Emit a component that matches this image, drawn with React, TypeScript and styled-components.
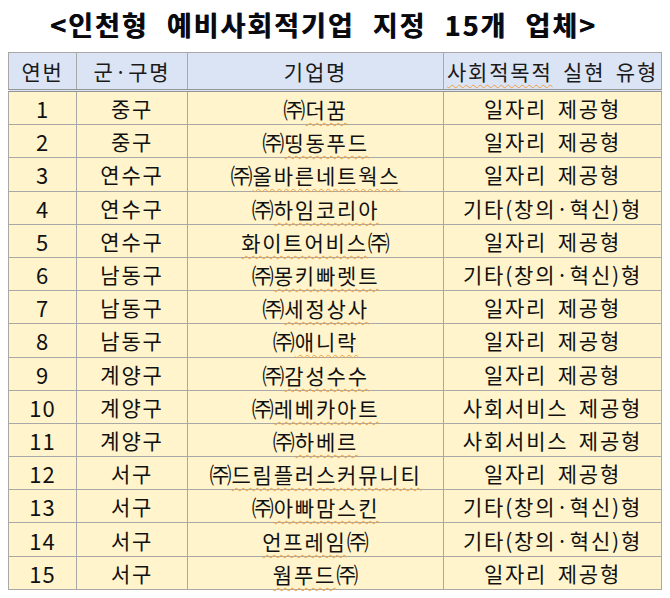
import React from 'react';
import styled, {createGlobalStyle} from 'styled-components';

const GlobalStyle = createGlobalStyle`
  html, body {
    margin: 0;
    padding: 0;
    background: #ffffff;
  }

  body {
    font-family: 'Noto Sans CJK KR', 'Noto Sans', sans-serif;
    color: #111111;
  }
`;

const Page = styled.div`
  width: 670px;
  height: 598px;
  padding: 10px 9px 0 8px;
  box-sizing: border-box;
`;

const Title = styled.h1`
  margin: 0 0 13px;
  padding-right: 22px;
  height: 29px;
  font-size: 27px;
  line-height: 29px;
  font-weight: 700;
  text-align: center;
  letter-spacing: 2px;
  word-spacing: 10px;
  color: #0a0a0a;
  text-shadow: 0.6px 0 0 #1a2a6a;
`;

const Table = styled.table`
  width: 653px;
  border-collapse: collapse;
  table-layout: fixed;
  font-size: 21px;
  letter-spacing: 1.8px;
  word-spacing: 4px;
`;

const HeadCell = styled.th`
  height: 36px;
  padding: 0;
  background: #dbe4f5;
  border: 1px solid #a8a8a8;
  border-bottom: 3px double #959595;
  font-weight: 400;
  text-align: center;
  color: #1a1a1a;
`;

const Cell = styled.td`
  height: 32.2px;
  padding: 0;
  background: #fff4cc;
  border: 1px solid #a8a8a8;
  text-align: center;
  white-space: nowrap;
  color: #111111;
`;

const Num = styled(Cell)`
  font-size: 22px;
  letter-spacing: 1px;
`;

const Squiggle = styled.span`
  text-decoration: underline wavy #f0a040;
  text-decoration-thickness: 1px;
  text-underline-offset: 4px;
`;

const Corp = styled.span`
  letter-spacing: 0;
  font-size: 22px;
`;

type Company = {
  no: number;
  district: string;
  name: string;
  lead: boolean;
  kind: string;
};

const companies: Company[] = [
  {no: 1, district: '중구', name: '더꿈', lead: true, kind: '일자리 제공형'},
  {no: 2, district: '중구', name: '띵동푸드', lead: true, kind: '일자리 제공형'},
  {no: 3, district: '연수구', name: '올바른네트웍스', lead: true, kind: '일자리 제공형'},
  {no: 4, district: '연수구', name: '하임코리아', lead: true, kind: '기타(창의·혁신)형'},
  {no: 5, district: '연수구', name: '화이트어비스', lead: false, kind: '일자리 제공형'},
  {no: 6, district: '남동구', name: '몽키빠렛트', lead: true, kind: '기타(창의·혁신)형'},
  {no: 7, district: '남동구', name: '세정상사', lead: true, kind: '일자리 제공형'},
  {no: 8, district: '남동구', name: '애니락', lead: true, kind: '일자리 제공형'},
  {no: 9, district: '계양구', name: '감성수수', lead: true, kind: '일자리 제공형'},
  {no: 10, district: '계양구', name: '레베카아트', lead: true, kind: '사회서비스 제공형'},
  {no: 11, district: '계양구', name: '하베르', lead: true, kind: '사회서비스 제공형'},
  {no: 12, district: '서구', name: '드림플러스커뮤니티', lead: true, kind: '일자리 제공형'},
  {no: 13, district: '서구', name: '아빠맘스킨', lead: true, kind: '기타(창의·혁신)형'},
  {no: 14, district: '서구', name: '언프레임', lead: false, kind: '기타(창의·혁신)형'},
  {no: 15, district: '서구', name: '웜푸드', lead: false, kind: '일자리 제공형'},
];

export default function App() {
  return (
    <Page>
      <GlobalStyle />
      <Title>&lt;인천형 예비사회적기업 지정 15개 업체&gt;</Title>
      <Table>
        <colgroup>
          <col style={{width: 68}} />
          <col style={{width: 111}} />
          <col style={{width: 256}} />
          <col style={{width: 218}} />
        </colgroup>
        <thead>
          <tr>
            <HeadCell>연번</HeadCell>
            <HeadCell>군·구명</HeadCell>
            <HeadCell>기업명</HeadCell>
            <HeadCell>
              <Squiggle>사회적목적</Squiggle> 실현 유형
            </HeadCell>
          </tr>
        </thead>
        <tbody>
          {companies.map((c) => (
            <tr key={c.no}>
              <Num>{c.no}</Num>
              <Cell>{c.district}</Cell>
              <Cell>
                {c.lead && <Corp>㈜</Corp>}
                <Squiggle>{c.name}</Squiggle>
                {!c.lead && <Corp>㈜</Corp>}
              </Cell>
              <Cell>{c.kind}</Cell>
            </tr>
          ))}
        </tbody>
      </Table>
    </Page>
  );
}
